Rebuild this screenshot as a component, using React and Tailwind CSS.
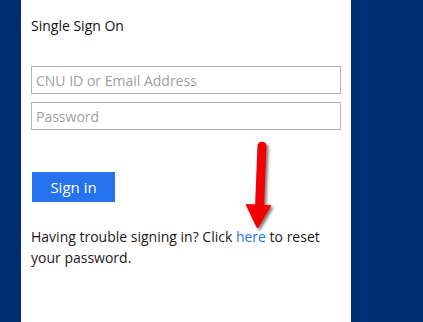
import React from 'react';

const font = { fontFamily: '"Open Sans", "Noto Sans", sans-serif' };

const Arrow = () => (
  <svg className="absolute left-[221px] top-[142px]" width="36" height="92" viewBox="0 0 36 92">
    <defs>
      <filter id="sh" x="-50%" y="-20%" width="200%" height="140%">
        <feDropShadow dx="2" dy="2" stdDeviation="1.5" floodColor="#000" floodOpacity="0.55" />
      </filter>
    </defs>
    <g filter="url(#sh)">
      <path d="M20 4 L17.5 66" stroke="#f00000" strokeWidth="9" strokeLinecap="round" fill="none" />
      <path d="M5 63 L28 64 L15.5 85 Z" fill="#f00000" stroke="#f00000" strokeWidth="2" strokeLinejoin="round" />
    </g>
  </svg>
);

const App = () => {
  return (
    <div className="w-[423px] h-[322px] bg-[#002f76] overflow-hidden" style={font}>
      <div className="relative ml-[21px] w-[330px] h-[322px] bg-white pl-[10px] pt-[16px]">
        <h1 className="text-[14px] leading-[20px] text-[#111]">Single Sign On</h1>

        <div className="mt-[30px] flex flex-col gap-[8px]">
          <input
            type="text"
            placeholder="CNU ID or Email Address"
            className="w-[310px] h-[28px] border border-[#b3b3b3] px-[4px] text-[14px] text-[#333] placeholder:text-[#a0a0a0] outline-none"
          />
          <input
            type="password"
            placeholder="Password"
            className="w-[310px] h-[28px] border border-[#b3b3b3] px-[4px] text-[14px] text-[#333] placeholder:text-[#a0a0a0] outline-none"
          />
        </div>

        <button className="mt-[42px] ml-[1px] w-[83px] h-[30px] bg-[#2672ec] text-white text-[15px] block">
          Sign in
        </button>

        <p className="mt-[24px] w-[300px] text-[14px] leading-[21px] text-[#1a1a1a]">
          Having trouble signing in? Click <a className="text-[#2672ec]">here</a> to reset your password.
        </p>

        <Arrow />
      </div>
    </div>
  );
};

export default App;
